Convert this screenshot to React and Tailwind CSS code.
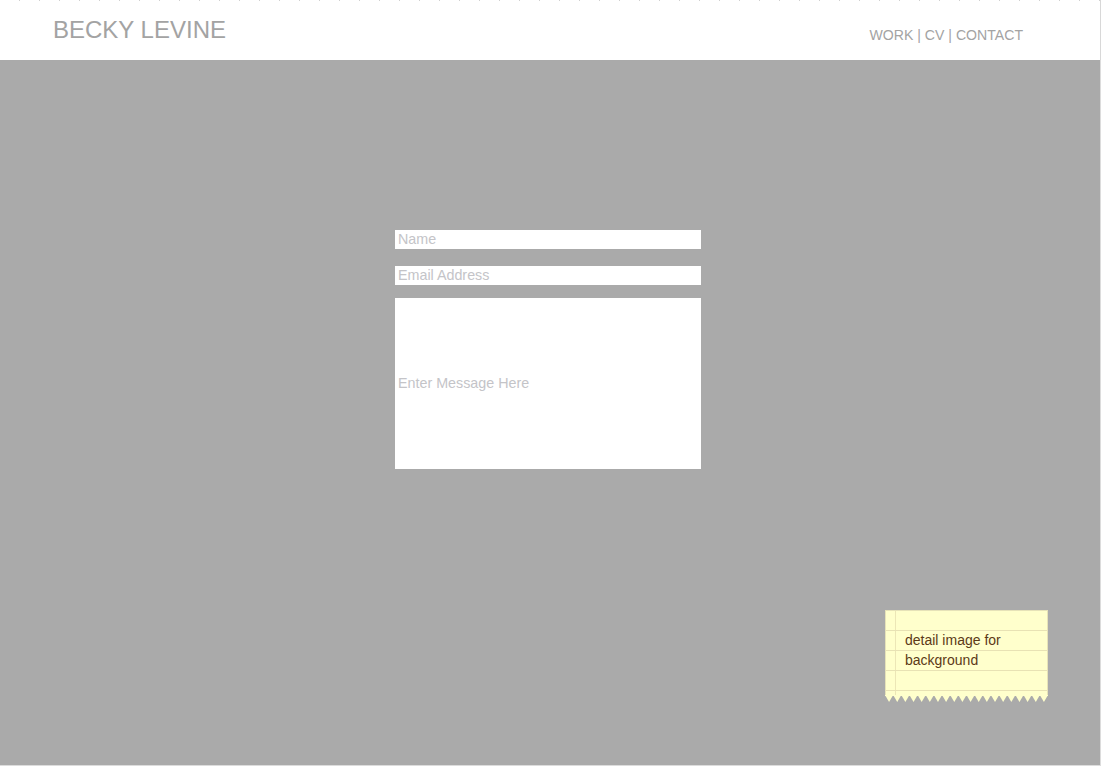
import React from 'react';

function StickyNote() {
    const teeth = [];
    for (let i = 0; i < 20; i++) {
        const x = i * 8.15;
        teeth.push(`${x},0 ${x + 4.07},7 ${x + 8.15},0`);
    }
    return (
        <div className="w-[163px]">
            <div className="relative h-[85px] bg-[#ffffcc] border-t border-x border-[#e6e2b8]">
                <div className="absolute left-[9px] top-0 bottom-0 w-px bg-[#ece6b6]" />
                <div className="absolute left-0 right-0 top-[19px] h-px bg-[#e8e2b4]" />
                <div className="absolute left-0 right-0 top-[39px] h-px bg-[#e8e2b4]" />
                <div className="absolute left-0 right-0 top-[59px] h-px bg-[#e8e2b4]" />
                <div className="absolute left-0 right-0 top-[79px] h-px bg-[#e8e2b4]" />
                <p className="relative pt-[19px] pl-[19px] text-[14px] leading-[20px] text-[#5c3a17]">
                    detail image for<br />background
                </p>
            </div>
            <svg width="163" height="7" viewBox="0 0 163 7" className="block">
                <rect x="0" y="0" width="163" height="1" fill="#ffffcc" />
                {teeth.map((t, i) => (
                    <polygon key={i} points={t} fill="#ffffcc" />
                ))}
            </svg>
        </div>
    );
}

export default function App() {
    return (
        <div
            className="w-[1101px] h-[766px] flex flex-col bg-white overflow-hidden"
            style={{ fontFamily: '"Liberation Sans", Arial, sans-serif' }}
        >
            <header className="relative h-[60px] flex items-start justify-between pl-[53px] pr-[77px] border-r border-[#d8d8d8]">
                <div className="absolute top-0 left-0 right-0 h-px bg-[repeating-linear-gradient(90deg,transparent_0px,transparent_19px,#d0d0d0_19px,#d0d0d0_20px)]" />
                <h1 className="mt-[16px] text-[24px] leading-[28px] text-[#a3a3a3]">BECKY LEVINE</h1>
                <nav className="mt-[27px] text-[14.1px] leading-[16px] text-[#a3a3a3]">
                    WORK | CV | CONTACT
                </nav>
            </header>

            <main className="flex-1 bg-[#aaaaaa] border-r border-b border-[#dcdcdc] flex flex-col">
                <form className="ml-[395px] mt-[170px] w-[306px] flex flex-col">
                    <input
                        type="text"
                        placeholder="Name"
                        className="h-[19px] bg-white px-[3px] text-[14.3px] text-[#999] placeholder:text-[#c4c4c8] outline-none"
                    />
                    <input
                        type="text"
                        placeholder="Email Address"
                        className="mt-[17px] h-[19px] bg-white px-[3px] text-[14.3px] text-[#999] placeholder:text-[#c4c4c8] outline-none"
                    />
                    <div className="mt-[13px] h-[171px] bg-white flex items-center px-[3px]">
                        <span className="text-[14.3px] text-[#c4c4c8]">Enter Message Here</span>
                    </div>
                </form>
                <div className="ml-[885px] mt-[141px]">
                    <StickyNote />
                </div>
            </main>
        </div>
    );
}
